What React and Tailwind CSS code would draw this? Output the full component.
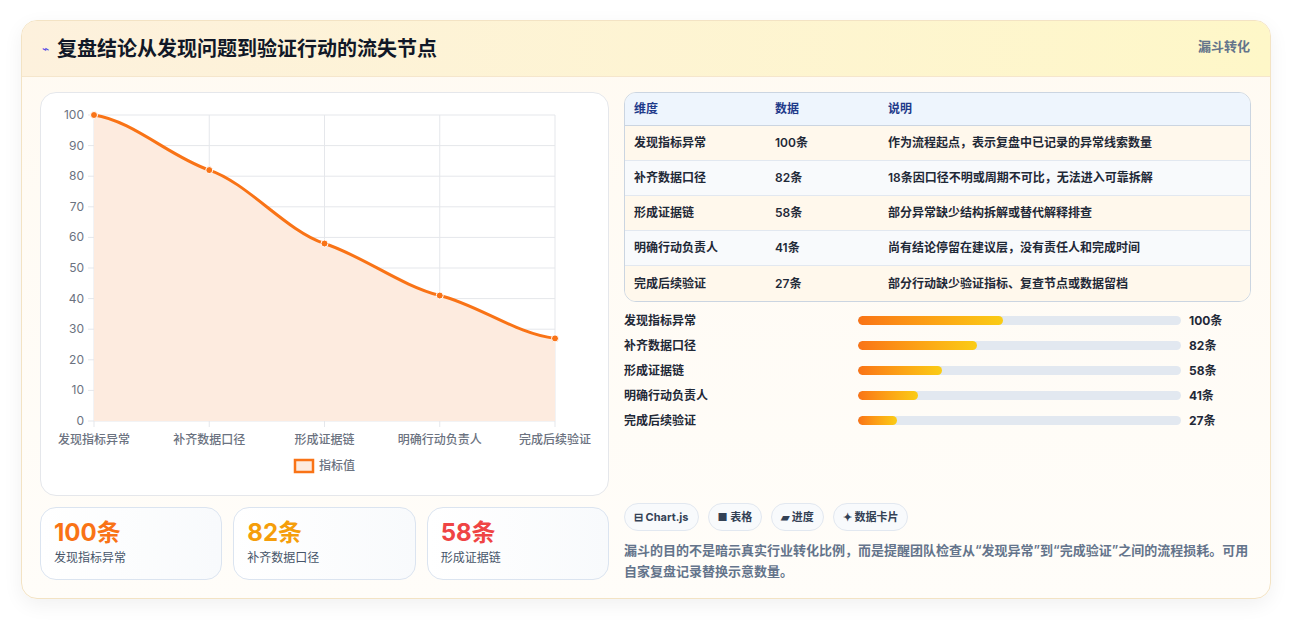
const rows = [
  ['发现指标异常', 100, '作为流程起点，表示复盘中已记录的异常线索数量'],
  ['补齐数据口径', 82, '18条因口径不明或周期不可比，无法进入可靠拆解'],
  ['形成证据链', 58, '部分异常缺少结构拆解或替代解释排查'],
  ['明确行动负责人', 41, '尚有结论停留在建议层，没有责任人和完成时间'],
  ['完成后续验证', 27, '部分行动缺少验证指标、复查节点或数据留档'],
]

function Chart() {
  const x0 = 53, x1 = 514, y0 = 22, y1 = 328
  const xs = rows.map((_, i) => x0 + ((x1 - x0) * i) / 4)
  const ys = rows.map((r) => y1 - ((y1 - y0) * r[1]) / 100)
  let d = `M${xs[0]},${ys[0]}`
  for (let i = 1; i < 5; i++) {
    const cx = (xs[i] - xs[i - 1]) / 3
    d += ` C${xs[i - 1] + cx},${ys[i - 1] + (ys[i] - (ys[i - 2] ?? ys[i - 1])) / 10} ${xs[i] - cx},${ys[i] - ((ys[i + 1] ?? ys[i]) - ys[i - 1]) / 10} ${xs[i]},${ys[i]}`
  }
  return (
    <svg width="568" height="403" className="block">
      {[0, 1, 2, 3, 4, 5, 6, 7, 8, 9, 10].map((k) => {
        const y = y1 - ((y1 - y0) * k) / 10
        return (
          <g key={k}>
            <line x1={x0 - 6} x2={x1} y1={y} y2={y} stroke="#e5e7eb" />
            <text x={x0 - 10} y={y + 4} textAnchor="end" fontSize="12" fill="#6b7280">{k * 10}</text>
          </g>
        )
      })}
      {xs.map((x, i) => (
        <g key={i}>
          <line x1={x} x2={x} y1={y0} y2={y1 + 6} stroke="#e5e7eb" />
          <text x={x} y={y1 + 23} textAnchor="middle" fontSize="12" fontWeight="500" fill="#6b7280">{rows[i][0]}</text>
        </g>
      ))}
      <path d={`${d} L${x1},${y1} L${x0},${y1} Z`} fill="#fdebdf" />
      <path d={d} fill="none" stroke="#f97316" strokeWidth="3" />
      {xs.map((x, i) => (
        <circle key={i} cx={x} cy={ys[i]} r="3.5" fill="#f97316" stroke="#fff" strokeWidth="1" />
      ))}
      <rect x="254" y="367" width="18" height="12" fill="#fdebdf" stroke="#f97316" strokeWidth="2.5" />
      <text x="278" y="377" fontSize="12" fontWeight="500" fill="#6b7280">指标值</text>
    </svg>
  )
}

export default function App() {
  return (
    <div className="min-h-[621px] bg-white px-[21px] pt-[20px]" style={{ fontFamily: 'Inter, "Noto Sans CJK SC", sans-serif' }}>
      <div className="w-[1250px] h-[579px] rounded-2xl border border-[#f3e3c4] bg-gradient-to-b from-[#fffaf2] to-[#fffdf9] shadow-[0_6px_20px_rgba(0,0,0,0.06)] overflow-hidden">
        <div className="h-[56px] flex items-center justify-between px-5 bg-gradient-to-r from-[#fdf1dd] to-[#fef7c8] border-b border-[#f5e6cc]">
          <div className="flex items-center gap-2">
            <span className="text-[#4f46e5] text-xs">⌁</span>
            <span className="text-[20px] font-bold text-[#111827]">复盘结论从发现问题到验证行动的流失节点</span>
          </div>
          <span className="text-[13px] font-semibold text-[#64748b] self-start mt-4">漏斗转化</span>
        </div>
        <div className="flex gap-[15px] pl-[18px] pr-[19px] pt-[15px]">
          <div className="w-[569px]">
            <div className="h-[404px] rounded-2xl border border-[#e5e7eb] bg-white overflow-hidden">
              <Chart />
            </div>
            <div className="flex gap-[11px] mt-[11px]">
              {[['100条', '发现指标异常', 'text-[#f97316]'], ['82条', '补齐数据口径', 'text-[#f59e0b]'], ['58条', '形成证据链', 'text-[#ef4444]']].map(([v, l, c]) => (
                <div key={l} className="flex-1 h-[73px] rounded-2xl border border-[#dbe4f0] bg-gradient-to-r from-white to-[#f8fafc] px-[13px] pt-[10px]">
                  <div className={`text-[24px] font-bold leading-[30px] ${c}`}>{v}</div>
                  <div className="text-xs text-[#475569] mt-[2px]">{l}</div>
                </div>
              ))}
            </div>
          </div>
          <div className="flex-1">
            <div className="rounded-xl border border-[#cbd5e1] overflow-hidden text-xs">
              <div className="flex h-[33px] items-center bg-[#eef5fd] font-bold text-[#1e3a8a] border-b border-[#cbd5e1]">
                <div className="w-[150px] pl-[9px]">维度</div>
                <div className="w-[113px]">数据</div>
                <div>说明</div>
              </div>
              {rows.map((r, i) => (
                <div key={i} className={`flex h-[35px] items-center font-semibold text-[#1f2937] border-b border-[#e2e8f0] last:border-b-0 ${i % 2 ? 'bg-[#f8fafc]' : 'bg-[#fff8ec]'}`}>
                  <div className="w-[150px] pl-[9px]">{r[0]}</div>
                  <div className="w-[113px]">{r[1]}条</div>
                  <div>{r[2]}</div>
                </div>
              ))}
            </div>
            <div className="mt-[10px] flex flex-col gap-[8px]">
              {rows.map((r) => (
                <div key={r[0]} className="flex items-center h-[17px] text-xs font-semibold">
                  <div className="w-[234px] text-[#1f2937]">{r[0]}</div>
                  <div className="w-[323px] h-[9px] rounded-full bg-[#e2e8f0] overflow-hidden">
                    <div className="h-full rounded-full bg-gradient-to-r from-[#f97316] to-[#facc15]" style={{ width: `${r[1] * 0.45}%` }} />
                  </div>
                  <div className="ml-[8px] font-bold text-[#1f2937]">{r[1]}条</div>
                </div>
              ))}
            </div>
            <div className="mt-[74px] flex gap-[9px]">
              {['⊟ Chart.js', '■ 表格', '▰ 进度', '✦ 数据卡片'].map((t) => (
                <span key={t} className="h-[28px] px-[9px] flex items-center rounded-full border border-[#e2e8f0] bg-[#f8fafc] text-[11px] font-bold text-[#334155]">{t}</span>
              ))}
            </div>
            <p className="mt-[9px] text-[13px] leading-[21px] font-semibold text-[#64748b]">
              漏斗的目的不是暗示真实行业转化比例，而是提醒团队检查从“发现异常”到“完成验证”之间的流程损耗。可用自家复盘记录替换示意数量。
            </p>
          </div>
        </div>
      </div>
    </div>
  )
}
